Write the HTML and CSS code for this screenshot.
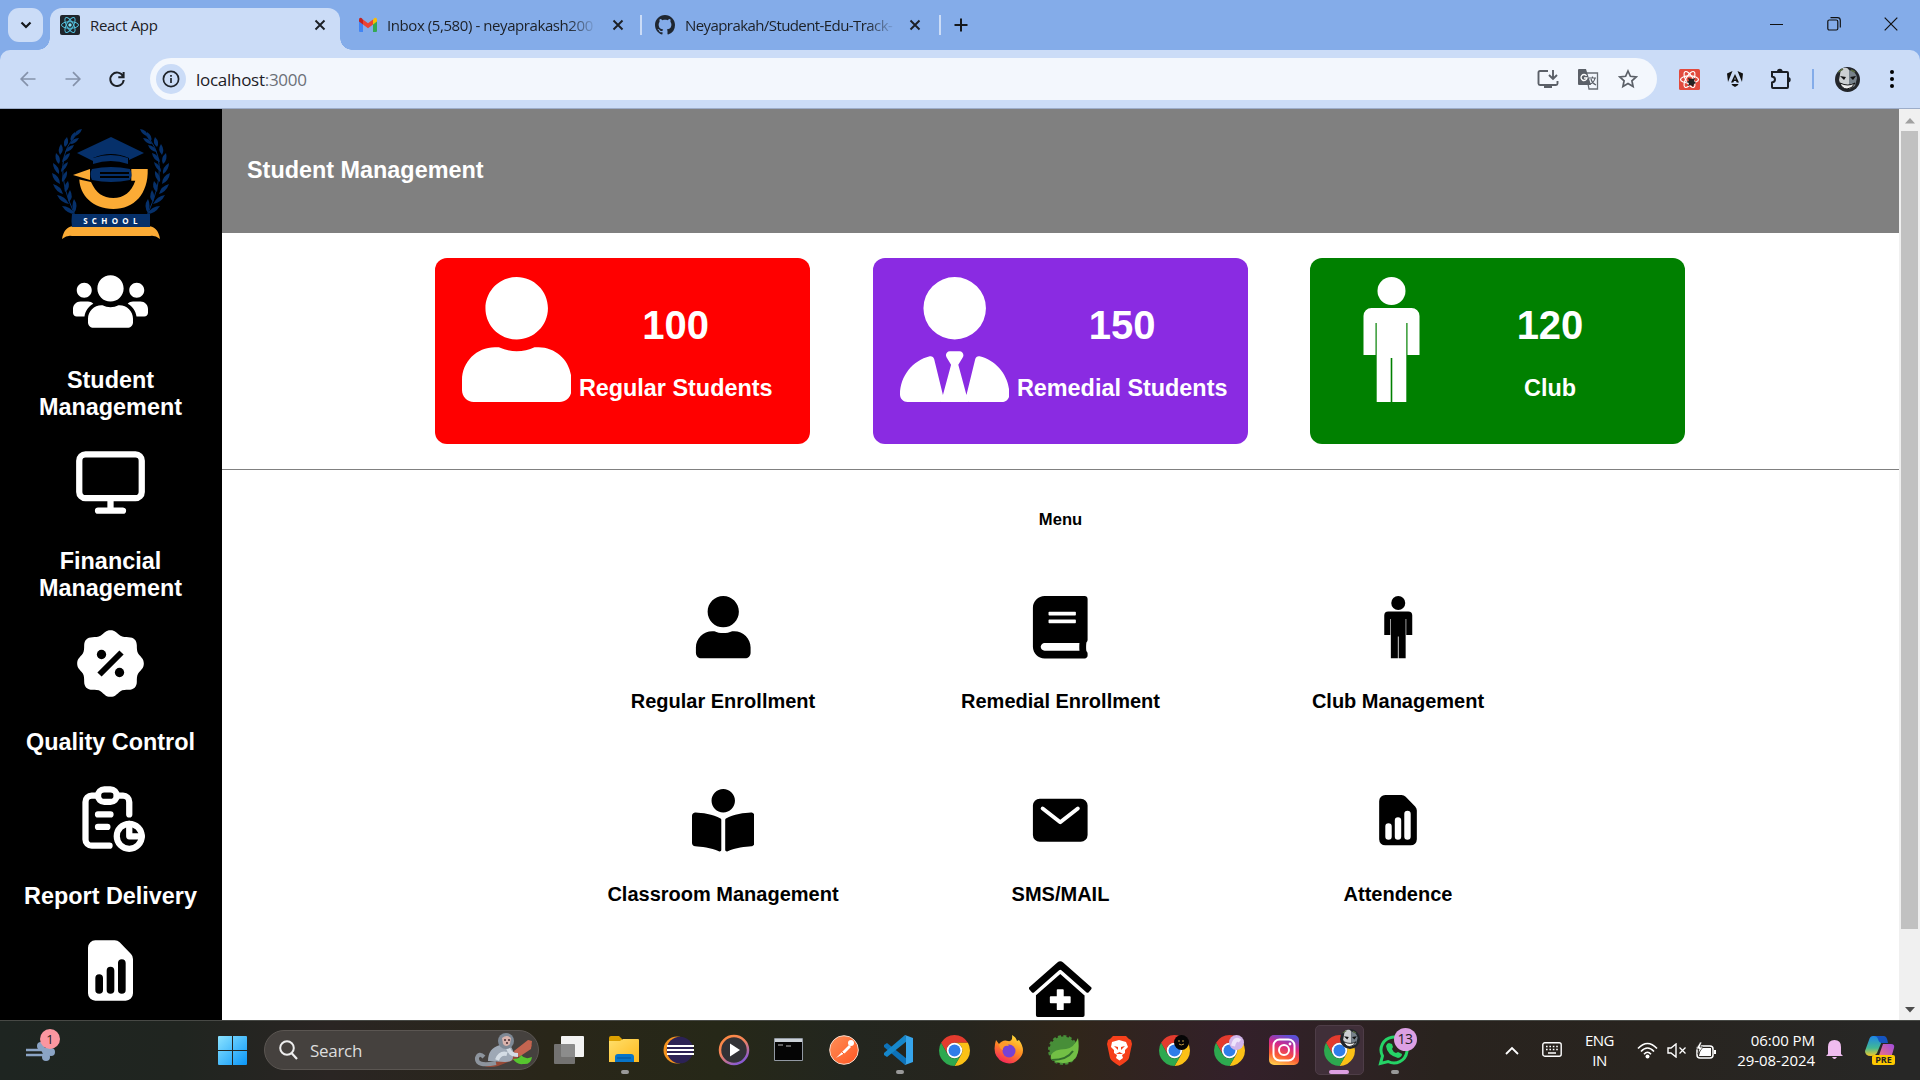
FILE: index.html
```html
<!DOCTYPE html>
<html lang="en">
<head>
<meta charset="utf-8">
<title>React App</title>
<link rel="stylesheet" href="styles.css">
</head>
<body>
<svg class="defs" width="0" height="0">
  <defs>
    <symbol id="chrome" viewBox="-12 -12 24 24">
      <path fill="#e33b2e" d="M-10.39-6A12 12 0 0 1 10.39-6L0-6A6 6 0 0 0-5.2 3Z"/>
      <path fill="#fbc116" transform="rotate(120)" d="M-10.39-6A12 12 0 0 1 10.39-6L0-6A6 6 0 0 0-5.2 3Z"/>
      <path fill="#2da94f" transform="rotate(240)" d="M-10.39-6A12 12 0 0 1 10.39-6L0-6A6 6 0 0 0-5.2 3Z"/>
      <circle r="6" fill="#fff"/><circle r="4.6" fill="#2f7de9"/>
    </symbol>
    <symbol id="close" viewBox="0 0 12 12"><path d="M1.5 1.5l9 9M10.5 1.5l-9 9" stroke="#1c2026" stroke-width="1.9"/></symbol>
    <symbol id="man" viewBox="0 0 28 62.5"><circle cx="14" cy="7" r="7"/><path d="M4 15.5H24a4 4 0 0 1 4 4V39H22V23h-.6V62.5H14.4V40.5h-.8V62.5H6.600V23H6V39H0V19.5a4 4 0 0 1 4-4z"/></symbol>
    <symbol id="stats" viewBox="264 600 135 181"><path fill-rule="evenodd" d="M286 600H344Q353 600 359 606L393 641Q399 647 399 656V759A22 22 0 0 1 377 781H286A22 22 0 0 1 264 759V622A22 22 0 0 1 286 600ZM286 713V749A11.500 11.500 0 0 0 309 749V713A11.500 11.500 0 0 0 286 713ZM320 691V749A11.500 11.500 0 0 0 343 749V691A11.500 11.500 0 0 0 320 691ZM354 668V749A11.500 11.500 0 0 0 377 749V668A11.500 11.500 0 0 0 354 668Z"/></symbol>
    <symbol id="user" viewBox="0 0 448 512"><path d="M224 256c70.7 0 128-57.3 128-128S294.7 0 224 0 96 57.3 96 128s57.3 128 128 128zm89.600 32h-16.700c-22.200 10.200-46.900 16-72.900 16s-50.600-5.800-72.900-16h-16.700C60.200 288 0 348.200 0 422.400V464c0 26.500 21.500 48 48 48h352c26.500 0 48-21.500 48-48v-41.600c0-74.200-60.200-134.400-134.400-134.400z"/></symbol>
    <symbol id="leaves" viewBox="0 0 30 88">
      <path d="M27 3Q-3 30 22 84" fill="none" stroke="#06306a" stroke-width="1"/>
      <g fill="#06306a">
        <path d="M30 0q-7 1-8 7q6-1 8-7z"/><path d="M23 3q-6 4-4 9q5-3 4-9zM27 9q-7 0-9 6q6 0 9-6z"/>
        <path d="M15 8q-5 5-2 10q5-4 2-10zM22 16q-7 1-9 7q7-1 9-7z"/>
        <path d="M9 15q-4 6-1 11q5-5 1-11zM18 24q-7 2-8 9q7-2 8-9z"/>
        <path d="M4 24q-2 7 3 11q3-6-3-11zM16 33q-7 3-7 10q6-4 7-10z"/>
        <path d="M1 34q0 7 6 11q1-7-6-11zM15 42q-6 4-5 11q6-4 5-11z"/>
        <path d="M0 44q1 8 8 11q0-8-8-11zM16 52q-5 5-3 11q6-4 3-11z"/>
        <path d="M1 55q3 8 10 10q-2-8-10-10zM18 61q-4 6-1 12q5-5 1-12z"/>
        <path d="M5 66q4 8 12 9q-4-8-12-9zM22 70q-3 6 0 14q5-7 0-14z"/>
        <path d="M10 77q5 8 13 8q-5-8-13-8z"/>
      </g>
    </symbol>
    <clipPath id="round"><circle cx="12.500" cy="12.500" r="12.500"/></clipPath>
    <symbol id="face" viewBox="0 0 25 25">
      <g clip-path="url(#round)"><path d="M0 0h25v25H0z" fill="#23262b"/><path d="M6 2q6-3 8 1v19q-8 0-10-9z" fill="#cdd0d2"/><path d="M14 3q7 1 8 8l-2 8-6 3z" fill="#77828b"/>
      <path d="M5 9l6 1-2 3zM15 10l6-1-3 4z" fill="#111"/><path d="M5 16q8 4 15 0q-3 6-8 6t-7-6z" fill="#eee" stroke="#111"/><path d="M3 5l5-3M16 3l4 2" stroke="#596b42" stroke-width="1.500"/></g>
    </symbol>
    <linearGradient id="win" x1="0" y1="0" x2="1" y2="1"><stop offset="0" stop-color="#8be3ff"/><stop offset="1" stop-color="#0a96f8"/></linearGradient>
    <linearGradient id="folder" x1="0" y1="0" x2="1" y2="1"><stop offset="0" stop-color="#ffdf6b"/><stop offset="1" stop-color="#ffb91d"/></linearGradient>
    <linearGradient id="ring" x1="0" y1="0" x2=".6" y2="1"><stop offset="0" stop-color="#ff8a3c"/><stop offset=".5" stop-color="#f5855b"/><stop offset="1" stop-color="#8a5bd0"/></linearGradient>
    <linearGradient id="insta" x1=".3" y1="1" x2=".6" y2="0"><stop offset="0" stop-color="#ffc84a"/><stop offset=".3" stop-color="#fb5a35"/><stop offset=".65" stop-color="#d5298b"/><stop offset="1" stop-color="#5b50d6"/></linearGradient>
    <linearGradient id="fire" x1=".8" y1="0" x2=".3" y2="1"><stop offset="0" stop-color="#ffe23a"/><stop offset=".5" stop-color="#ff8a22"/><stop offset="1" stop-color="#f5215c"/></linearGradient>
    <linearGradient id="post" x1="0" y1="0" x2="1" y2="1"><stop offset="0" stop-color="#ff9058"/><stop offset="1" stop-color="#ff5522"/></linearGradient>
    <linearGradient id="cop" x1="0" y1="0" x2="0" y2="1"><stop offset="0" stop-color="#1d86e8"/><stop offset=".6" stop-color="#42b894"/><stop offset="1" stop-color="#f5c928"/></linearGradient>
    <linearGradient id="cop2" x1="1" y1="0" x2="0" y2="1"><stop offset="0" stop-color="#a04be0"/><stop offset="1" stop-color="#ff7d6b"/></linearGradient>
  </defs>
</svg>

<div class="tabs">
  <div class="tab-search"><svg width="12" height="8" viewBox="0 0 12 8"><path d="M1.500 1.500L6 6l4.500-4.500" fill="none" stroke="#15181c" stroke-width="2.200"/></svg></div>
  <div class="tab active">
    <svg class="fav" viewBox="0 0 20 20"><rect width="20" height="20" rx="2" fill="#20252b"/><g fill="none" stroke="#53c1de"><ellipse cx="10" cy="10" rx="8.500" ry="3.300"/><ellipse cx="10" cy="10" rx="8.500" ry="3.300" transform="rotate(60 10 10)"/><ellipse cx="10" cy="10" rx="8.500" ry="3.300" transform="rotate(120 10 10)"/></g><circle cx="10" cy="10" r="1.700" fill="#7fe3fa"/></svg>
    <span class="tab-title react">React App</span>
    <svg class="x" width="12" height="12"><use href="#close"/></svg>
  </div>
  <div class="tab inbox">
    <svg class="fav" viewBox="0 0 20 20"><path d="M1 5v11q0 1 1 1h3V8z" fill="#4285f4"/><path d="M19 5v11q0 1-1 1h-3V8z" fill="#34a853"/><path d="M15 4.500v5l4-3V5q0-3-2.500-2z" fill="#fbbc04"/><path d="M5 4.500v5l-4-3V5q0-3 2.500-2z" fill="#c5221f"/><path d="M5 4.500l5 3.800 5-3.800v5l-5 3.800-5-3.800z" fill="#ea4335"/></svg>
    <span class="tab-title mail">Inbox (5,580) - neyaprakash200</span>
    <svg class="x" width="12" height="12"><use href="#close"/></svg>
  </div>
  <i class="sep"></i>
  <div class="tab github">
    <svg class="fav" viewBox="0 0 16 16"><path fill="#1f2630" d="M8 0C3.580 0 0 3.580 0 8c0 3.540 2.290 6.530 5.470 7.590.4.070.55-.17.55-.38 0-.19-.01-.82-.01-1.490-2.010.37-2.530-.49-2.690-.94-.09-.23-.48-.94-.82-1.130-.28-.15-.68-.52-.01-.53.63-.01 1.080.58 1.230.82.72 1.210 1.870.87 2.330.66.07-.52.28-.87.51-1.070-1.780-.2-3.640-.89-3.640-3.950 0-.87.31-1.590.82-2.150-.08-.2-.36-1.020.08-2.120 0 0 .67-.21 2.200.82.64-.18 1.320-.27 2-.27s1.360.09 2 .27c1.530-1.040 2.200-.82 2.200-.82.44 1.100.16 1.920.08 2.120.51.56.82 1.270.82 2.150 0 3.070-1.870 3.750-3.650 3.950.29.25.54.73.54 1.480 0 1.070-.01 1.930-.01 2.200 0 .21.15.46.55.38A8.010 8.010 0 0 0 16 8c0-4.420-3.580-8-8-8z"/></svg>
    <span class="tab-title repo">Neyaprakah/Student-Edu-Track-</span>
    <svg class="x" width="12" height="12"><use href="#close"/></svg>
  </div>
  <i class="sep"></i>
  <svg class="plus" width="14" height="14" viewBox="0 0 14 14"><path d="M7 .5v13M.5 7h13" stroke="#15181c" stroke-width="2"/></svg>
  <div class="window-controls">
    <svg width="14" height="14"><path d="M0 7.500h13" stroke="#111"/></svg>
    <svg width="14" height="14"><g fill="none" stroke="#111" stroke-width="1.200"><rect x=".8" y="3" width="10" height="10" rx="1.500"/><path d="M3.500 .7h7q2.800 0 2.800 2.800v7"/></g></svg>
    <svg width="14" height="14"><path d="M.7.7l12.600 12.600M13.300.7L.7 13.300" stroke="#111" stroke-width="1.200"/></svg>
  </div>
</div>

<div class="toolbar">
  <svg class="nav dim" viewBox="0 0 16 16"><path d="M15.500 8H1.500M8 1.200L1.200 8 8 14.800"/></svg>
  <svg class="nav dim" viewBox="0 0 16 16"><path d="M.5 8h14M8 1.200L14.800 8 8 14.800"/></svg>
  <svg class="nav" viewBox="0 0 16 16"><path d="M14 5.200A6.700 6.700 0 1 0 14.700 9M14.600 1v5.300H9.300"/></svg>
  <div class="omnibox">
    <div class="info"><svg width="18" height="18" viewBox="0 0 18 18"><circle cx="9" cy="9" r="7.600" fill="none" stroke="#1f242b" stroke-width="1.700"/><path d="M9 8v5M9 5v1.700" stroke="#1f242b" stroke-width="1.700"/></svg></div>
    <span class="url">localhost<b>:3000</b></span>
    <div class="box-icons">
      <svg width="22" height="20" viewBox="0 0 22 20"><path d="M11 2H3Q1.500 2 1.500 3.500v11Q1.500 16 3 16h16q1.500 0 1.500-1.500V12M16 1v8M12 6l4 4 4-4" fill="none" stroke="#5b6068" stroke-width="1.900"/><path d="M7 16h8v3H7z" fill="#5b6068"/></svg>
      <svg width="21" height="21" viewBox="0 0 21 21"><path d="M8 4h11.500v16H11z" fill="none" stroke="#686d74" stroke-width="1.300"/><path d="M1 0h7l5 16H1q-1 0-1-1V1q0-1 1-1z" fill="#5b6068"/><path d="M8.500 6.800A3 3 0 1 0 9 9H6" fill="none" stroke="#fff" stroke-width="1.400"/><path d="M11 9h7M14.500 7.500V9M17 9q-1 5-5 6M13 10q1 4 5 6" fill="none" stroke="#5b6068" stroke-width="1.200"/></svg>
      <svg width="20" height="20" viewBox="0 0 20 20"><path d="M10 2l2.400 5.300 5.800.6-4.300 3.900 1.200 5.700L10 14.600l-5.100 2.900 1.200-5.700L1.800 7.900l5.800-.6z" fill="none" stroke="#5b6068" stroke-width="1.700"/></svg>
    </div>
  </div>
  <div class="extensions">
    <svg width="21" height="21" viewBox="0 0 21 21"><rect width="21" height="21" rx="1.500" fill="#e24a3d"/><g fill="none" stroke="#fff" stroke-width="1.200"><ellipse cx="10.500" cy="10.500" rx="9" ry="3.600"/><ellipse cx="10.500" cy="10.500" rx="9" ry="3.600" transform="rotate(60 10.500 10.500)"/><ellipse cx="10.500" cy="10.500" rx="9" ry="3.600" transform="rotate(120 10.500 10.500)"/></g><path d="M9 9l4 1 3-1-1 3 2 2-2 1-1 3-2-2-3 1 1-3-3-1 3-1z" fill="#222"/></svg>
    <svg width="16" height="16" viewBox="0 0 16 16"><path d="M5.500 0L0 2.500 1 11zM10.500 0L16 2.500 15 11zM8 3l4 8.500h-2.300L9 10H7l-.7 1.500H4zM8 6.300L7.300 8.400h1.400zM4.500 13h7l-.7 1.300L8 16l-2.800-1.700z" fill="#111" fill-rule="evenodd"/></svg>
    <svg width="21" height="22" viewBox="0 0 21 22"><path d="M2 4h15q1 0 1 1v14q0 1-1 1H3q-1 0-1-1v-4.500q3-.5 3-3t-3-3z" fill="none" stroke="#1a1e24" stroke-width="2"/><path d="M7 3.500a2.800 2.800 0 0 1 5.600 0zM18 9a2.700 2.700 0 0 1 0 5.400z" fill="#1a1e24"/></svg>
    <i class="bar"></i>
    <svg width="25" height="25"><use href="#face"/></svg>
    <svg width="4" height="18" viewBox="0 0 4 18"><circle cx="2" cy="2" r="2"/><circle cx="2" cy="9" r="2"/><circle cx="2" cy="16" r="2"/></svg>
  </div>
</div>

<div class="viewport">
  <aside class="sidebar">
    <svg class="logo" viewBox="0 0 120 114">
      <svg x="1" y="2" width="30" height="88"><use href="#leaves"/></svg>
      <g transform="translate(119 0) scale(-1 1)"><svg x="0" y="2" width="30" height="88"><use href="#leaves"/></svg></g>
      <path d="M60 10L93 26 78 33V31Q60 23 42 31v3L26 26z" fill="#06306a"/>
      <path d="M42 31q18-6 35 0v6q-17-6-35 0z" fill="#06306a"/>
      <path d="M22 48L39 42v11z" fill="#fbab35"/>
      <path d="M28.300 52.500L40 55C45 66 52 71 62.300 71S80.500 65 84.300 53.700H80.300V42H96.700C97.500 67 83 82 62.300 82S29 68 28.300 52.500Z" fill="#fbab35"/>
      <path d="M41 42q19-4 38 0 3 6 0 11-19 4-38 0-3-6 0-11z" fill="#06306a"/>
      <path d="M49 46h29M49 50h29" stroke="#000" stroke-width="1.800"/>
      <path d="M11 112q2-13 13-13h72q11 0 13 13-5-4-10-3H21q-5-1-10 3z" fill="#fbab35"/>
      <path d="M21 87h78v13H21q-1-6 0-13z" fill="#06306a"/>
      <text x="61.500" y="97" text-anchor="middle" class="logo-text">SCHOOL</text>
    </svg>
    <div class="side-item"><svg viewBox="0 0 640 512" fill="#fff"><path d="M96 224c35.300 0 64-28.700 64-64s-28.700-64-64-64-64 28.700-64 64 28.700 64 64 64zm448 0c35.300 0 64-28.700 64-64s-28.700-64-64-64-64 28.700-64 64 28.700 64 64 64zm32 32h-64c-17.600 0-33.500 7.100-45.100 18.600 40.300 22.100 68.900 62 75.100 109.400h66c17.700 0 32-14.300 32-32v-32c0-35.300-28.700-64-64-64zm-256 0c61.900 0 112-50.100 112-112S381.900 32 320 32 208 82.100 208 144s50.100 112 112 112zm76.800 32h-8.300c-20.800 10-43.900 16-68.500 16s-47.600-6-68.500-16h-8.300C179.600 288 128 339.600 128 403.200V432c0 26.500 21.500 48 48 48h288c26.500 0 48-21.500 48-48v-28.800c0-63.600-51.600-115.200-115.200-115.200zm-223.700-13.400C161.500 263.100 145.600 256 128 256H64c-35.300 0-64 28.700-64 64v32c0 17.700 14.300 32 32 32h65.900c6.300-47.400 34.900-87.300 75.200-109.400z"/></svg><h2>Student<br>Management</h2></div>
    <div class="side-item"><svg viewBox="0 0 24 24" class="line"><rect x="2" y="3" width="20" height="14" rx="2"/><path d="M8 21h8M12 17v4"/></svg><h2>Financial<br>Management</h2></div>
    <div class="side-item"><svg viewBox="-112.500 -112.500 225 225"><path fill="#fff" d="M0-100C14-100 18-92 30-83C36-79 46-79 54-79C70-79 79-70 79-54C79-46 79-36 83-30C92-18 100-14 100 0C100 14 92 18 83 30C79 36 79 46 79 54C79 70 70 79 54 79C46 79 36 79 30 83C18 92 14 100 0 100C-14 100-18 92-30 83C-36 79-46 79-54 79C-70 79-79 70-79 54C-79 46-79 36-83 30C-92 18-100 14-100 0C-100-14-92-18-83-30C-79-36-79-46-79-54C-79-70-70-79-54-79C-46-79-36-79-30-83C-18-92-14-100 0-100Z"/><circle cx="-27" cy="-27" r="14"/><circle cx="27" cy="27" r="14"/><path d="M-33 33L33-33" stroke="#000" stroke-width="18"/></svg><h2>Quality Control</h2></div>
    <div class="side-item"><svg viewBox="0 0 24 24" class="line"><path d="M8 5H6a2 2 0 0 0-2 2v12a2 2 0 0 0 2 2h5.697M18 14v4h4M18 11V7a2 2 0 0 0-2-2h-2M8 11h4M8 15h3"/><rect x="8" y="3" width="6" height="4" rx="2"/><circle cx="18" cy="18" r="4"/></svg><h2>Report Delivery</h2></div>
    <div class="side-item stats-item"><svg fill="#fff"><use href="#stats"/></svg></div>
  </aside>

  <main class="content">
    <header class="page-header"><h2>Student Management</h2></header>
    <section class="cards">
      <article class="card red"><svg class="card-icon"><use href="#user"/></svg><div><h1>100</h1><h2>Regular Students</h2></div></article>
      <article class="card violet"><svg class="card-icon" viewBox="0 0 448 512"><path d="M224 256A128 128 0 1 1 224 0a128 128 0 1 1 0 256zM209.100 359.200l-18.600-31c-6.400-10.700 1.300-24.200 13.700-24.200H243.700c12.400 0 20.100 13.600 13.700 24.200l-18.600 31 33.400 123.900 36-146.900c2-8.100 9.800-13.400 17.900-11.300c70.100 17.600 121.900 81 121.900 156.400c0 17-13.800 30.700-30.700 30.700H285.500c-2.100 0-4-.4-5.800-1.100l.3 1.100H168l.3-1.100c-1.800.7-3.800 1.100-5.800 1.100H30.700C13.800 512 0 498.200 0 481.300c0-75.500 51.900-138.900 121.900-156.400c8.100-2 15.900 3.300 17.900 11.300l36 146.900 33.400-123.900z"/></svg><div><h1>150</h1><h2>Remedial Students</h2></div></article>
      <article class="card green"><svg class="card-icon"><use href="#man"/></svg><div><h1>120</h1><h2>Club</h2></div></article>
    </section>
    <hr>
    <h4 class="menu-title">Menu</h4>
    <section class="menu">
      <div class="menu-item"><svg><use href="#user"/></svg><h3>Regular Enrollment</h3></div>
      <div class="menu-item"><svg viewBox="0 0 448 512"><path d="M448 360V24c0-13.300-10.700-24-24-24H96C43 0 0 43 0 96v320c0 53 43 96 96 96h328c13.300 0 24-10.700 24-24v-16c0-7.500-3.500-14.300-8.900-18.700-4.200-15.400-4.200-59.300 0-74.700 5.400-4.300 8.900-11.100 8.900-18.600zM128 134c0-3.300 2.700-6 6-6h212c3.300 0 6 2.700 6 6v20c0 3.300-2.700 6-6 6H134c-3.300 0-6-2.700-6-6v-20zm0 64c0-3.300 2.700-6 6-6h212c3.300 0 6 2.700 6 6v20c0 3.300-2.700 6-6 6H134c-3.300 0-6-2.700-6-6v-20zm253.400 250H96c-17.700 0-32-14.300-32-32 0-17.600 14.400-32 32-32h285.400c-1.900 17.100-1.900 46.900 0 64z"/></svg><h3>Remedial Enrollment</h3></div>
      <div class="menu-item"><svg><use href="#man"/></svg><h3>Club Management</h3></div>
      <div class="menu-item"><svg viewBox="0 0 512 512"><path d="M352 96c0-53.020-42.980-96-96-96s-96 42.980-96 96 42.980 96 96 96 96-42.980 96-96zM233.590 241.100c-59.330-36.320-155.430-46.300-203.790-49.050C13.550 191.130 0 203.510 0 219.140v222.800c0 14.330 11.590 26.280 26.490 27.050 43.660 2.290 131.990 10.680 193.040 41.430 9.370 4.720 20.480-1.710 20.480-11.870V252.560c-.01-4.670-2.320-8.950-6.420-11.460zm248.610-49.050c-48.350 2.740-144.460 12.730-203.780 49.050-4.100 2.510-6.410 6.960-6.410 11.630v245.790c0 10.190 11.140 16.630 20.540 11.900 61.040-30.720 149.320-39.110 192.970-41.400 14.900-.78 26.490-12.730 26.490-27.060V219.140c-.01-15.630-13.560-28.010-29.800-27.090z"/></svg><h3>Classroom Management</h3></div>
      <div class="menu-item"><svg viewBox="0 0 512 512"><path d="M424 80H88a56.060 56.060 0 0 0-56 56v240a56.060 56.060 0 0 0 56 56h336a56.060 56.060 0 0 0 56-56V136a56.060 56.060 0 0 0-56-56zm-14.180 92.630l-144 112a16 16 0 0 1-19.640 0l-144-112a16 16 0 1 1 19.640-25.260L256 251.730l134.180-104.360a16 16 0 0 1 19.640 25.260z"/></svg><h3>SMS/MAIL</h3></div>
      <div class="menu-item small-stats"><svg><use href="#stats"/></svg><h3>Attendence</h3></div>
    </section>
    <div class="menu-last"><svg viewBox="0 0 576 512"><path d="M288 115L69.470 307.710c-1.620 1.460-3.690 2.140-5.470 3.350V496a16 16 0 0 0 16 16h416a16 16 0 0 0 16-16V311.100c-1.700-1.160-3.720-1.820-5.260-3.200zm96 261a8 8 0 0 1-8 8h-56v56a8 8 0 0 1-8 8h-48a8 8 0 0 1-8-8v-56h-56a8 8 0 0 1-8-8v-48a8 8 0 0 1 8-8h56v-56a8 8 0 0 1 8-8h48a8 8 0 0 1 8 8v56h56a8 8 0 0 1 8 8zm186.690-139.720l-255.940-226a39.850 39.850 0 0 0-53.450 0l-256 226a16 16 0 0 0-1.210 22.600L25.500 282.700a16 16 0 0 0 22.600 1.210L277.420 81.630a16 16 0 0 1 21.170 0L527.910 283.900a16 16 0 0 0 22.600-1.210l21.400-23.820a16 16 0 0 0-1.220-22.590z"/></svg></div>
  </main>

  <div class="scrollbar">
    <svg width="10" height="6"><path d="M5 0l5 5.500H0z" fill="#a0a0a0"/></svg>
    <div class="thumb"></div>
    <svg width="10" height="6"><path d="M5 5.500L10 0H0z" fill="#4d4d4d"/></svg>
  </div>
</div>

<footer class="taskbar">
  <div class="weather">
    <svg width="30" height="24" viewBox="0 0 30 24"><g fill="none" stroke="#8ba4c5" stroke-width="2.600"><path d="M0 12h19M0 17h18"/></g><g fill="#8ba4c5"><circle cx="15" cy="8" r="4"/><circle cx="25" cy="14" r="4"/><circle cx="20" cy="19" r="4"/><path d="M14 10h12v6H17z"/></g></svg>
    <span class="badge pink">1</span>
  </div>
  <div class="start"><svg width="29" height="29"><path fill="url(#win)" d="M1 0H14V14H0V1Q0 0 1 0ZM15 0H28Q29 0 29 1V14H15ZM0 15H14V29H1Q0 29 0 28ZM15 15H29V28Q29 29 28 29H15Z"/></svg></div>
  <div class="search">
    <svg width="19" height="20" viewBox="0 0 19 20"><circle cx="8" cy="8" r="6.800" fill="none" stroke="#eee" stroke-width="2"/><path d="M12.500 13l5.500 6" stroke="#eee" stroke-width="2.200"/></svg>
    <span>Search</span>
    <svg class="monkey" width="58" height="34" viewBox="0 0 58 34"><path d="M5 30q18 3 30-8L55 7l3 6-16 13-18 7q-12 3-19-3z" fill="#984b38"/><path d="M40 18L54 7l4 1-1 8-12 8z" fill="#c46550"/><path d="M22 30Q2 34 3 25q2-6 7-1" fill="none" stroke="#8d949d" stroke-width="4"/><path d="M14 28q0-13 12-16l8-1q7 5 5 13 0 5-8 5z" fill="#9ea8b5"/><path d="M23 27q3-8 10-6M34 15q2 7 10 7" fill="none" stroke="#d5dde5" stroke-width="4"/><circle cx="32" cy="8" r="8" fill="#7e8996"/><path d="M28 5q5-4 9 0l-1 6q-4 4-7 0z" fill="#d9b3ac"/><path d="M30 7h2M34 7h2M32 10h2" stroke="#452d33" stroke-width="1.600"/><path d="M39 26q7 0 8-4 4 5 11 2-1 8-9 7-6 1-10-5z" fill="#57c52f"/></svg>
  </div>
  <nav class="apps">
    <div><svg width="32" height="30"><rect x="8" y="1" width="23" height="21" rx="1" fill="#f3f3f3"/><rect x="1" y="9" width="21" height="20" rx="1" fill="#7d7d7d" opacity=".88"/></svg></div>
    <div class="running"><svg width="32" height="30"><path d="M1 3q0-2 2-2h8l3 3v5H1z" fill="#dca000"/><path d="M1 6h11l3-2h15q1 0 1 1v22H1z" fill="url(#folder)"/><path d="M7 27v-5q0-3 3-3h13q3 0 3 3v5z" fill="#0874c8"/><path d="M9 23h14" stroke="#064f93"/></svg></div>
    <div><svg width="32" height="30"><circle cx="14" cy="15" r="13.500" fill="#f7941e"/><circle cx="17" cy="15" r="13.300" fill="#2c2255"/><path d="M4 11h27M4 15h27M4 19h27" stroke="#fff" stroke-width="2"/></svg></div>
    <div><svg width="32" height="32"><circle cx="16" cy="16" r="14" fill="#323236" stroke="url(#ring)" stroke-width="2.500"/><path d="M12 9.500L22 16l-10 6.500z" fill="#fff"/></svg></div>
    <div><svg width="30" height="24"><path d="M.5.500h28v22H.5z" fill="#050505" stroke="#9299a3"/><path d="M1 2.500h27" stroke="#ccd2d8" stroke-width="3"/><path d="M4 7h5M12 8h5" stroke="#bbb"/></svg></div>
    <div><svg width="32" height="32"><circle cx="16" cy="16" r="14.300" fill="url(#post)" stroke="#f6dacb"/><path d="M8 24l7-7 6-6 2 2-6 6z" fill="#fff"/><circle cx="23" cy="9" r="3" fill="#fff"/><path d="M13 17l3 3" stroke="#ff6633"/></svg></div>
    <div class="running"><svg width="32" height="32" viewBox="0 0 32 32"><path d="M1 11l3-2 20 16-2 6L1 13z" fill="#0d72b9"/><path d="M1 21l3 2L24 7l-2-6L1 19z" fill="#1687cb"/><path d="M22 1l8 3v24l-8 3 1-3V4z" fill="#36a5ec"/></svg></div>
    <div><svg width="31" height="31"><use href="#chrome"/></svg></div>
    <div><svg width="32" height="32" viewBox="0 0 32 32"><path d="M3 6l3 4q4-5 9-3 5 1 4-6 4 2 5 6l2-1q8 11 0 19-7 7-16 3Q-2 22 3 6z" fill="url(#fire)"/><circle cx="16" cy="17" r="6.500" fill="#7642d4"/><path d="M6 10q6-4 10 2-7-1-6 4-4-1-4-6z" fill="#ff9a2a"/></svg></div>
    <div><svg width="32" height="32" viewBox="0 0 32 32"><circle cx="15" cy="16" r="13.500" fill="#478e38" stroke="#478e38" stroke-width="3" stroke-dasharray="3 2.300"/><path d="M30 4q4 25-15 25-14-1-12-8 3-6 15-6 8-1 12-11z" fill="#72bf45"/><path d="M4 26q15 0 21-9" stroke="#326d2c" stroke-width="2" fill="none"/></svg></div>
    <div><svg width="27" height="31" viewBox="0 0 27 31"><path d="M7 1h13l3 3 2 1 1 4-3 14q-1 3-9.500 8Q5 26 4 23L1 9l1-4 2-1z" fill="#f6401b"/><path d="M6 7l7-2 7 2 2 5-3 3v3l-3 2 1 3-3.500 2.500L10 23l1-3-3-2v-3l-3-3z" fill="#fff"/><path d="M8 11l4 1v3zM19 11l-4 1v3zM10 19l3.500-2 3.500 2" fill="#f6401b"/></svg></div>
    <div><svg width="31" height="31"><use href="#chrome"/></svg><svg class="profile" width="15" height="15"><circle cx="7.500" cy="7.500" r="7.500" fill="#050505"/><path d="M4 6h2M8 6h2M5 9q2 2 5 0" stroke="#c39b42" fill="none"/></svg></div>
    <div><svg width="31" height="31"><use href="#chrome"/></svg><svg class="profile" width="15" height="15"><circle cx="7.500" cy="7.500" r="7.500" fill="#d0b4ea"/><path d="M4 11q2-9 7-5" stroke="#eee4fa" stroke-width="4" fill="none"/></svg></div>
    <div><svg width="30" height="30"><rect width="30" height="30" rx="5" fill="url(#insta)"/><g fill="none" stroke="#fff" stroke-width="2"><rect x="4.500" y="4.500" width="21" height="21" rx="6"/><circle cx="15" cy="15" r="5"/></g><circle cx="21" cy="9" r="1.400" fill="#fff"/></svg></div>
    <div class="running current"><svg width="31" height="31"><use href="#chrome"/></svg><svg class="profile big" width="20" height="20"><use href="#face"/></svg></div>
    <div class="running"><svg width="32" height="32" viewBox="0 0 32 32"><path d="M2.500 29.500l2-7.500A13 13 0 1 1 10 27.500z" fill="none" stroke="#25d366" stroke-width="3"/><path d="M11 9l3 1 1 3-1 2q1 3 4 4l2-1 4 2q0 3-4 4-11-3-12-12 1-3 3-3z" fill="#25d366"/></svg><span class="badge lilac">13</span></div>
  </nav>
  <div class="tray">
    <svg class="t1" width="14" height="9"><path d="M1 8l6-6 6 6" fill="none" stroke="#fff" stroke-width="1.800"/></svg>
    <svg class="t2" width="21" height="16"><rect x=".8" y=".8" width="18.400" height="13.400" rx="2" fill="none" stroke="#fff" stroke-width="1.400"/><path d="M4 4.500h13M4 7.500h13" stroke="#fff" stroke-width="1.500" stroke-dasharray="1.600 1.800"/><path d="M6 11h8" stroke="#fff" stroke-width="1.500"/></svg>
    <span class="lang">ENG<br>IN</span>
    <svg class="t3" width="21" height="17" viewBox="0 0 21 17"><g fill="none" stroke="#fff" stroke-width="1.600"><path d="M1 6.500q9.500-10 19 0M4 9.500q6.500-7 13 0M7 12.200q3.500-3.800 7 0"/></g><circle cx="10.500" cy="14.500" r="2" fill="#fff"/></svg>
    <svg class="t4" width="20" height="15"><path d="M1 5h3l5-4v13l-5-4H1z" fill="none" stroke="#fff" stroke-width="1.400"/><path d="M12.500 4.500l6 6M18.500 4.500l-6 6" stroke="#fff" stroke-width="1.300"/></svg>
    <svg class="t5" width="21" height="17"><rect x="1" y="4" width="16" height="12" rx="3" fill="none" stroke="#fff" stroke-width="1.500"/><path d="M5 6h10v8H3zM18 8h2v4h-2z" fill="#fff"/><path d="M4 0L0 7h3l-1 5 5-7H4l2-5z" fill="#fff" stroke="#272420" stroke-width=".7"/></svg>
    <span class="clock">06:00 PM<br>29-08-2024</span>
    <svg class="t6" width="17" height="20" viewBox="0 0 17 20"><path d="M2 14V7q0-7 6.500-7T15 7v7l2 2H0zM6 17h5q-2.500 4-5 0z" fill="#efbcf0"/></svg>
    <div class="copilot"><svg width="30" height="26" viewBox="0 0 30 26"><path d="M8 0h11l-7 17q-2 3-6 3-6 0-6-5L4 4q1-4 4-4z" fill="url(#cop)"/><path d="M9 0h10q3 0 4 7h-6q-3 0-4-4-1-3-4-3z" fill="#1554c0"/><path d="M18 8h8q4 0 3 4l-3 10q-2 3-6 3h-8z" fill="url(#cop2)"/></svg><b>PRE</b></div>
  </div>
</footer>
</body>
</html>
```
FILE: styles.css
```css
* { box-sizing: border-box; }
body { margin: 0; width: 1920px; height: 1080px; overflow: hidden; display: flex; flex-direction: column; background: #84ace9; font-family: "Liberation Sans", Arial, sans-serif; }
svg { display: block; flex: none; }
.defs { position: absolute; }
h1, h2, h3, h4 { margin: 0; font-weight: bold; }

/* browser tab strip */
.tabs { height: 50px; flex: none; display: flex; background: #84ace9; font: 15px "Open Sans", "Noto Sans", sans-serif; color: #1c2026; }
.tab-search { width: 35px; height: 34px; margin: 8px 7px 0 8px; border-radius: 11px; background: #cbdcf7; display: flex; align-items: center; justify-content: center; }
.tab { height: 42px; margin-top: 8px; display: flex; align-items: center; padding-bottom: 8px; }
.fav { width: 20px; height: 20px; }
.tab-title { white-space: nowrap; overflow: hidden; margin-left: 11px; line-height: 24px; }
.x { margin-left: auto; }
.active { position: relative; width: 290px; padding: 0 14px 8px 10px; background: #cbdcf7; border-radius: 12px 12px 0 0; }
.active::before, .active::after { content: ""; position: absolute; bottom: 0; width: 12px; height: 12px; }
.active::before { left: -12px; background: radial-gradient(circle at 0 0, transparent 11.500px, #cbdcf7 12px); }
.active::after { right: -12px; background: radial-gradient(circle at 100% 0, transparent 11.500px, #cbdcf7 12px); }
.inbox { width: 301px; padding-left: 18px; padding-right: 17px; }
.github { width: 297px; padding-left: 13px; padding-right: 18px; }
.mail { width: 210px; margin-left: 9px; letter-spacing: -.42px; mask-image: linear-gradient(90deg, #000 86%, transparent 100%); }
.repo { width: 211px; margin-left: 10px; letter-spacing: -.58px; mask-image: linear-gradient(90deg, #000 86%, transparent 100%); }
.react { margin-left: 10px; letter-spacing: -.3px; }
.sep { width: 2px; height: 20px; margin-top: 15px; background: #cbdcf7; }
.inbox + .sep { margin-left: -1px; }
.plus { margin: 18px 0 0 13px; }
.window-controls { margin: 17px 22px 0 auto; display: flex; gap: 43px; }

/* browser toolbar */
.toolbar { height: 59px; flex: none; display: flex; align-items: center; background: #cbdcf7; border-radius: 10px 10px 0 0; border-bottom: 1px solid #9dadc9; padding: 0 26px 0 20px; }
.nav { width: 16px; height: 16px; margin-right: 28px; fill: none; stroke: #1c2026; stroke-width: 2; overflow: visible; }
.nav.dim { stroke: #8592aa; stroke-width: 1.700; margin-right: 29px; }
.nav:nth-child(3) { margin-right: 24px; margin-left: -1px; }
.omnibox { width: 1507px; height: 42px; border-radius: 21px; background: #f3f7fd; display: flex; align-items: center; padding: 0 19px 0 6px; margin-left: 1px; }
.info { width: 30px; height: 30px; border-radius: 50%; background: #cbdcf7; display: flex; align-items: center; justify-content: center; }
.url { margin-left: 10px; font: 17px "Open Sans", sans-serif; letter-spacing: -.28px; color: #1c2026; }
.url b { font-weight: normal; color: #6b7078; }
.box-icons { margin-left: auto; display: flex; align-items: center; gap: 19px; }
.extensions { margin-left: auto; display: flex; align-items: center; }
.extensions svg:nth-child(2) { margin-left: 27px; }
.extensions svg:nth-child(3) { margin-left: 27px; }
.bar { width: 2px; height: 20px; background: #84ace9; margin: 0 21px 0 21px; }
.extensions svg:last-child { margin-left: 30px; }

/* page */
.viewport { height: 911px; flex: none; display: flex; background: #fff; overflow: hidden; }
.sidebar { width: 222px; flex: none; background: #000; color: #fff; overflow: hidden; display: flex; flex-direction: column; align-items: center; padding-right: 1px; }
.logo { width: 120px; height: 114px; margin: 18px 0 23px; flex: none; }
.logo-text { font: bold 8px "Open Sans", sans-serif; letter-spacing: 4.300px; fill: #fff; }
.side-item { flex: none; display: flex; flex-direction: column; align-items: center; margin-bottom: 23.500px; text-align: center; }
.side-item svg { width: 75px; height: 75px; margin-bottom: 28px; }
.side-item h2 { font-size: 23.400px; line-height: 27.300px; white-space: nowrap; }
.side-item .line { fill: none; stroke: #fff; stroke-width: 2; stroke-linecap: round; stroke-linejoin: round; }
.side-item.stats-item svg { width: 45px; height: 61px; margin-top: 6px; }
.content { width: 1677px; flex: none; overflow: hidden; color: #000; }
.page-header { height: 124px; padding: 0 25px 1px; background: #808080; color: #fff; display: flex; align-items: center; }
.page-header h2 { font-size: 23.400px; line-height: 27px; }
.cards { display: flex; justify-content: center; gap: 62.500px; padding: 25px 1px 25px 0; }
.card { width: 375px; height: 186px; border-radius: 12px; color: #fff; fill: #fff; display: flex; padding: 19px 0 0 26.500px; text-align: center; }
.card-icon { width: 109.400px; height: 125px; margin-right: 8px; }
.card div { padding-top: 25.500px; }
.card h1 { font-size: 40px; line-height: 45px; }
.card h2 { font-size: 23.400px; line-height: 27px; margin-top: 27px; white-space: nowrap; }
.red { background: #f00; }
.violet { background: #8a2be2; padding-left: 27px; }
.green { background: green; padding-left: 19px; }
.green .card-icon { width: 125px; margin-right: 0; }
.green div { width: 192px; }
hr { margin: 0; border: 0; height: 1px; background: gray; }
.menu-title { text-align: center; font-size: 16.600px; line-height: 18px; margin-top: 41px; }
.menu { width: 1012.500px; margin: 67px auto 0; display: grid; grid-template-columns: repeat(3, 337.500px); row-gap: 76.500px; }
.menu-item { height: 116.500px; display: flex; flex-direction: column; align-items: center; }
.menu-item svg { width: 62.500px; height: 62.500px; margin-bottom: 31px; }
.menu-item h3 { font-size: 20px; line-height: 23px; }
.menu-item.small-stats svg { width: 38px; height: 50.500px; margin: 6px 0 37px; }
.menu-last { display: flex; justify-content: center; margin-top: 52.500px; }
.menu-last svg { width: 62.500px; height: 62.500px; }
.scrollbar { width: 21px; background: #f0f0f0; display: flex; flex-direction: column; align-items: center; padding: 9px 0 7px; }
.thumb { width: 17px; height: 798px; margin-top: 7px; background: #c1c1c1; }
.scrollbar svg:last-child { margin-top: auto; }

/* taskbar */
.taskbar { height: 60px; flex: none; display: flex; align-items: center; border-top: 1px solid #474945; color: #fff; font-family: "Open Sans", "Noto Sans", sans-serif; padding-bottom: 1px; background: linear-gradient(90deg, #1e2521 0, #202520 180px, #2a2523 330px, #292619 550px, #262818 720px, #23261f 850px, #26251e 960px, #30261a 1070px, #33202a 1240px, #29231e 1440px, #28241f 1660px, #272726 1900px); }
.weather { position: relative; width: 209px; padding-left: 26px; }
.badge { position: absolute; border-radius: 50%; color: #221c22; text-align: center; }
.pink { left: 40px; top: -9px; width: 20px; height: 20px; background: #fb96a0; font-size: 13px; line-height: 20px; }
.start { width: 46px; display: flex; justify-content: center; }
.search { width: 275px; height: 40px; margin: 0 2.500px 0 9px; border-radius: 20px; border: 1px solid #5b5652; background: #45413e; display: flex; align-items: center; padding-left: 14px; font-size: 17px; color: #ddd; letter-spacing: -.3px; }
.search span { margin-left: 12px; }
.monkey { margin-left: auto; margin-right: 6px; }
.apps { display: flex; }
.apps > div { position: relative; width: 55px; height: 58px; display: flex; align-items: center; justify-content: center; }
.apps > div > svg { position: relative; }
.running::after { content: ""; position: absolute; bottom: 5px; left: 24px; width: 8px; height: 4px; border-radius: 2px; background: #999; }
.current::before { content: ""; position: absolute; inset: 4px 3px 4px; border: 1px solid #4e3d47; border-radius: 5px; background: #402f39; }
.current::after { left: 17px; width: 20px; background: #dd9fe2; }
.apps > div > .profile { position: absolute; left: 27px; top: 14px; }
.apps > div > .profile.big { left: 28px; top: 8px; }
.lilac { left: 27px; top: 7px; width: 23px; height: 23px; background: #dca0e4; font-size: 14px; line-height: 22px; letter-spacing: -.5px; }
.tray { margin-left: auto; display: flex; align-items: center; font-size: 15px; line-height: 20px; padding-right: 25px; letter-spacing: -.5px; }
.t1 { margin-right: 23px; }
.t2 { margin-right: 21px; }
.lang { text-align: center; width: 31px; margin-right: 22px; }
.t3 { margin-right: 9px; }
.t4 { margin-right: 9px; }
.t5 { margin-right: 16px; }
.clock { text-align: right; width: 82px; white-space: nowrap; letter-spacing: -.05px; }
.t6 { margin: 0 22px 0 11px; }
.copilot { position: relative; width: 30px; height: 28px; }
.copilot b { position: absolute; left: 7px; bottom: -1px; width: 23px; height: 10px; border-radius: 2px; background: #fdc800; color: #222; font-size: 9px; line-height: 10px; letter-spacing: 0; text-align: center; }
```
